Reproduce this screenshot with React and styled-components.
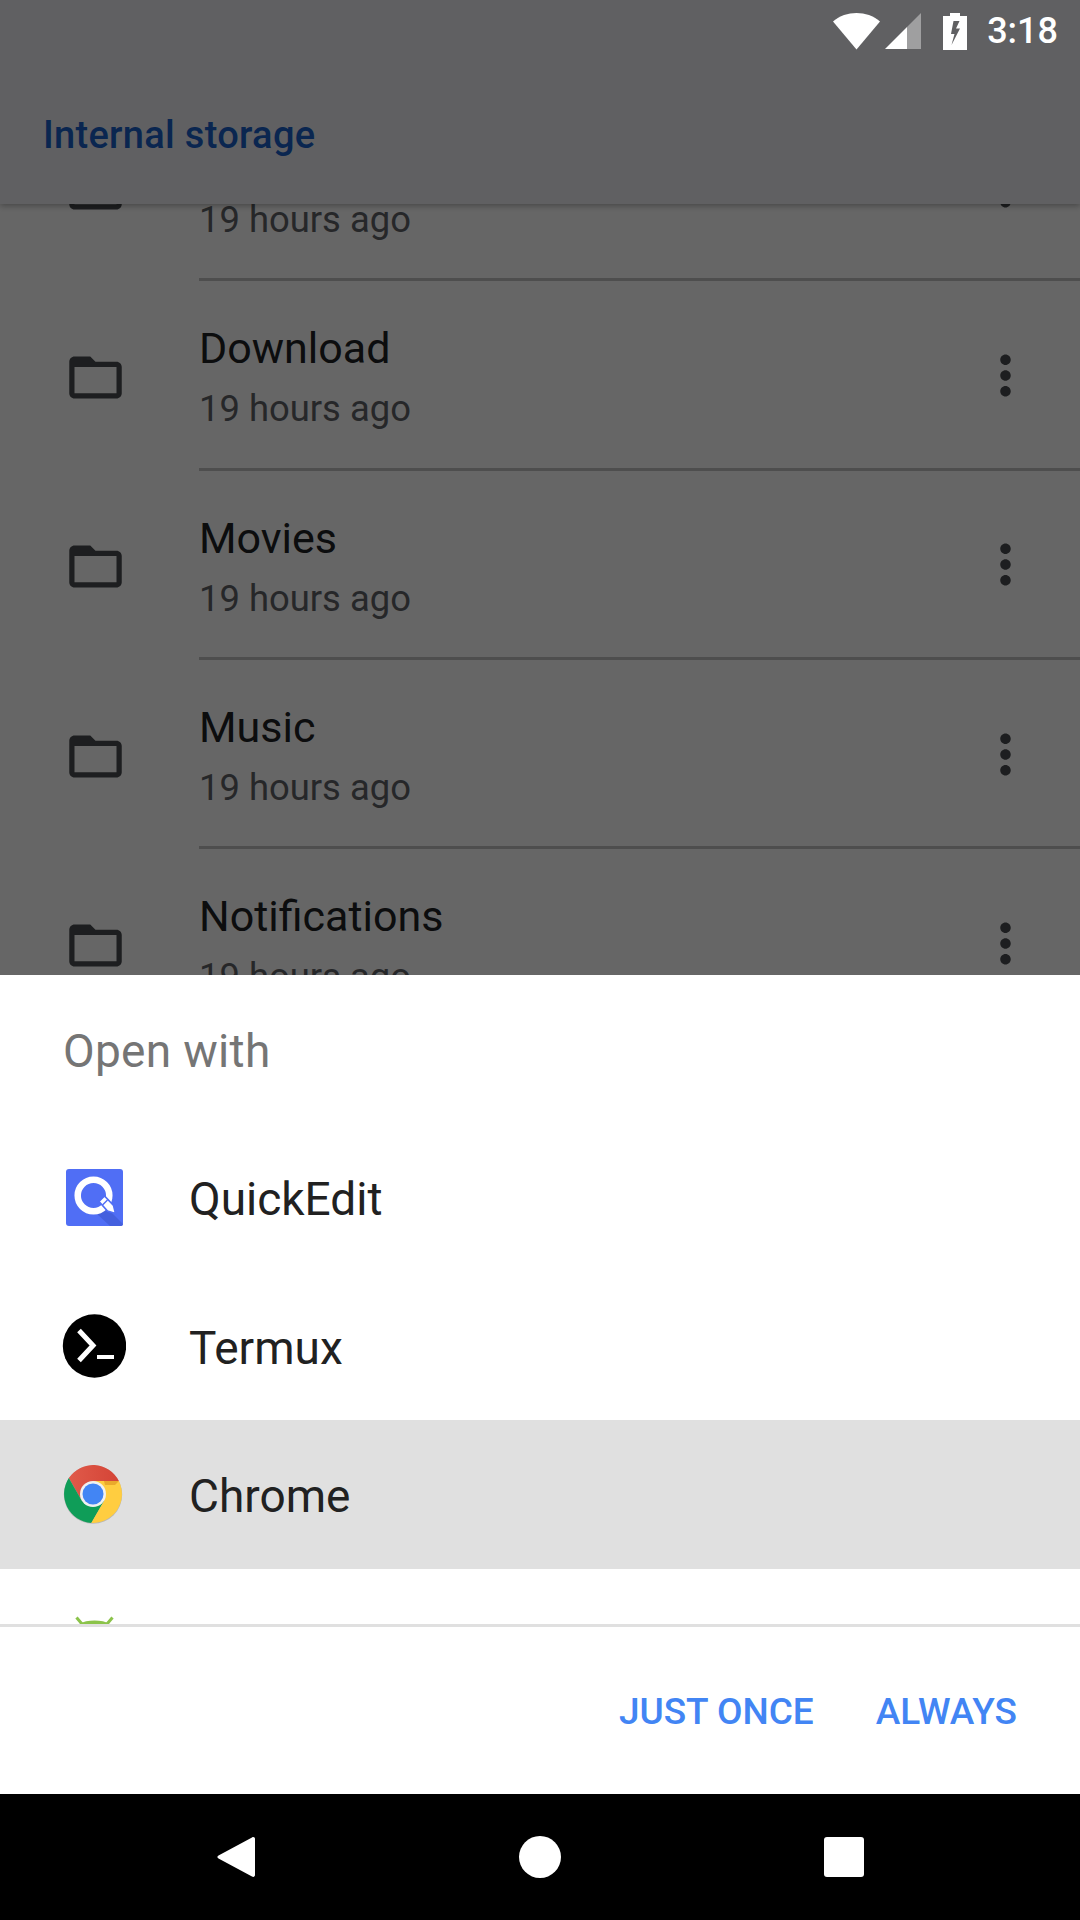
import React from 'react'
import styled, { createGlobalStyle } from 'styled-components'

const GlobalStyle = createGlobalStyle`
  html, body {
    margin: 0;
    padding: 0;
    background: #666;
  }
  body {
    font-family: Roboto, "Liberation Sans", sans-serif;
  }
`

const folders = [
  { name: '\u00a0', time: '19 hours ago' },
  { name: 'Download', time: '19 hours ago' },
  { name: 'Movies', time: '19 hours ago' },
  { name: 'Music', time: '19 hours ago' },
  { name: 'Notifications', time: '19 hours ago' },
]

const Screen = styled.div`
  position: relative;
  width: 1080px;
  height: 1920px;
  overflow: hidden;
  background: #fff;
`

const Page = styled.div`
  display: flex;
  flex-direction: column;
  height: 100%;
`

const Toolbar = styled.header`
  position: relative;
  z-index: 1;
  flex: none;
  height: 204px;
  box-sizing: border-box;
  padding: 114px 0 0 43px;
  background: #eff1f4;
  box-shadow: 0 2px 6px rgba(0, 0, 0, 0.3);
`

const Crumb = styled.div`
  font-size: 38px;
  font-weight: 500;
  line-height: 42px;
  letter-spacing: 0.3px;
  color: #1a5fc8;
`

const FolderList = styled.div`
  flex: 1;
  margin-top: -112px;
`

const FolderRow = styled.div`
  display: flex;
  height: 189.3px;
  padding-left: 64px;
`

const FolderIcon = styled.svg`
  flex: none;
  align-self: center;
  width: 63px;
  height: 63px;
  margin-top: 3px;
  fill: #4a4d50;
`

const FolderBody = styled.div`
  flex: 1;
  display: flex;
  align-items: center;
  margin-left: 72px;
  box-sizing: border-box;
  border-bottom: 3px solid #c4c4c4;
`

const FolderText = styled.div`
  flex: 1;
  padding-top: 3px;
`

const FolderName = styled.div`
  font-size: 43px;
  line-height: 56px;
  color: #202124;
`

const FolderTime = styled.div`
  margin-top: 11px;
  font-size: 36.4px;
  line-height: 44px;
  color: #5f6368;
`

const MoreIcon = styled.svg`
  flex: none;
  width: 63px;
  height: 63px;
  margin: 2px 43px 0 0;
  fill: #4a4d50;
`

const Overlay = styled.div`
  position: absolute;
  inset: 0;
  z-index: 2;
  display: flex;
  flex-direction: column;
  background: rgba(0, 0, 0, 0.6);
`

const StatusBar = styled.div`
  flex: none;
  display: flex;
  align-items: center;
  justify-content: flex-end;
  height: 62px;
  padding-right: 22px;
`

const StatusIcon = styled.svg`
  display: block;
  flex: none;
  margin-left: ${(p) => p.$gap}px;
`

const Clock = styled.div`
  margin-left: 20px;
  font-size: 36px;
  font-weight: 500;
  color: #fff;
`

const Spacer = styled.div`
  flex: 1;
`

const Sheet = styled.section`
  flex: none;
  height: 819px;
  display: flex;
  flex-direction: column;
  background: #fff;
`

const SheetTitle = styled.div`
  flex: none;
  height: 148px;
  box-sizing: border-box;
  padding: 51px 0 0 63px;
  font-size: 46px;
  line-height: 50px;
  letter-spacing: 0.3px;
  color: #757575;
`

const AppList = styled.div`
  flex: none;
  height: 501px;
  overflow: hidden;
`

const AppRow = styled.div`
  display: flex;
  align-items: center;
  height: 148.6px;
  padding-left: 60px;
  background: ${(p) => (p.$active ? '#e0e0e0' : 'transparent')};
`

const AppIcon = styled.svg`
  display: block;
  flex: none;
  width: 66px;
  height: 66px;
`

const AppName = styled.div`
  margin: 4px 0 0 63px;
  font-size: 46px;
  color: #212121;
`

const ButtonBar = styled.div`
  flex: 1;
  display: flex;
  align-items: center;
  justify-content: flex-end;
  gap: 62px;
  padding: 2px 63px 0 0;
  border-top: 3px solid #e0e0e0;
`

const ActionButton = styled.div`
  font-size: 37px;
  font-weight: 500;
  color: #4285f4;
`

const NavBar = styled.nav`
  flex: none;
  height: 126px;
  display: flex;
  align-items: center;
  justify-content: space-between;
  padding: 0 216px 0 217px;
  background: #000;
`

const NavIcon = styled.svg`
  display: block;
  width: ${(p) => p.$w}px;
  height: 42px;
  fill: #fff;
`

const QuickEditIcon = () => (
  <AppIcon viewBox="0 0 66 66">
    <rect x="6" y="5" width="57" height="57" rx="3" fill="#506ef5" />
    <path d="M48 45 L63 60 Q63 62 61 62 L50 62 L36 49 Z" fill="#4460de" />
    <circle cx="33.5" cy="31.5" r="15.8" fill="none" stroke="#fff" strokeWidth="6.5" />
    <path d="M39 37.5 L44.5 32 L53.5 41.5 L55.5 49.5 L47.5 47 Z" fill="#fff" stroke="#506ef5" strokeWidth="1.6" />
    <path d="M42.5 41 L47.5 36" stroke="#506ef5" strokeWidth="1.4" />
  </AppIcon>
)

const TermuxIcon = () => (
  <AppIcon viewBox="0 0 66 66">
    <circle cx="34.5" cy="33" r="31.7" fill="#000" />
    <path d="M19 17.5 L33 32.5 L19 47.5" fill="none" stroke="#fff" strokeWidth="5" />
    <rect x="37" y="42" width="17" height="4" fill="#fff" />
  </AppIcon>
)

const ChromeIcon = () => (
  <AppIcon viewBox="-33 -33 66 66">
    <defs>
      <linearGradient id="chromeRed" x1="0" y1="0" x2="1" y2="0">
        <stop offset="0" stopColor="#e05a4a" />
        <stop offset="1" stopColor="#d44436" />
      </linearGradient>
    </defs>
    <circle cx="0" cy="0.6" r="29.2" fill="#000" opacity="0.18" />
    <path d="M0 0 L0 -13 L25.9 -13 A29 29 0 0 0 -24.2 -15.9 L-11.3 6.5 Z" fill="url(#chromeRed)" />
    <path d="M0 0 L-11.3 6.5 L-24.2 -15.9 A29 29 0 0 0 -1.7 28.9 L11.3 6.5 Z" fill="#0f9d58" />
    <path d="M0 0 L11.3 6.5 L-1.7 28.9 A29 29 0 0 0 25.9 -13 L0 -13 Z" fill="#ffcd40" />
    <path d="M11 -13 L25.9 -13 L22 -9 L12 -9 Z" fill="#eaa92c" />
    <circle cx="0" cy="0" r="13" fill="#f1f1f1" />
    <circle cx="0" cy="0" r="10.5" fill="#4285f4" />
  </AppIcon>
)

const AndroidIcon = () => (
  <AppIcon viewBox="0 0 66 66">
    <path d="M16 18 C19 8 50 8 53 18 L53 34 L16 34 Z" fill="#8bc34a" />
    <path d="M22 14 L16.5 7.5 M47 14 L52.5 7.5" stroke="#8bc34a" strokeWidth="3" />
  </AppIcon>
)

const FolderGlyph = () => (
  <FolderIcon viewBox="0 0 24 24">
    <path d="M20 6h-8l-2-2H4c-1.1 0-1.99.9-1.99 2L2 18c0 1.1.9 2 2 2h16c1.1 0 2-.9 2-2V8c0-1.1-.9-2-2-2zm0 12H4V8h16v10z" />
  </FolderIcon>
)

const MoreGlyph = () => (
  <MoreIcon viewBox="0 0 24 24">
    <path d="M12 8c1.1 0 2-.9 2-2s-.9-2-2-2-2 .9-2 2 .9 2 2 2zm0 2c-1.1 0-2 .9-2 2s.9 2 2 2 2-.9 2-2-.9-2-2-2zm0 6c-1.1 0-2 .9-2 2s.9 2 2 2 2-.9 2-2-.9-2-2-2z" />
  </MoreIcon>
)

export default function App() {
  return (
    <Screen>
      <GlobalStyle />
      <Page>
        <Toolbar>
          <Crumb>Internal storage</Crumb>
        </Toolbar>
        <FolderList>
          {folders.map((folder, idx) => (
            <FolderRow key={idx}>
              <FolderGlyph />
              <FolderBody>
                <FolderText>
                  <FolderName>{folder.name}</FolderName>
                  <FolderTime>{folder.time}</FolderTime>
                </FolderText>
                <MoreGlyph />
              </FolderBody>
            </FolderRow>
          ))}
        </FolderList>
      </Page>
      <Overlay>
        <StatusBar>
          <StatusIcon width="47" height="37" viewBox="0 0 47 37">
            <path d="M0 8.5 C13 -2.8 34 -2.8 47 8.5 L23.5 36.5 Z" fill="#fff" />
          </StatusIcon>
          <StatusIcon $gap={5} width="36" height="36" viewBox="0 0 36 36">
            <path d="M22 14 L36 0 L36 36 L22 36 Z" fill="#fff" opacity="0.4" />
            <path d="M0 36 L22 14 L22 36 Z" fill="#fff" />
          </StatusIcon>
          <StatusIcon $gap={22} width="24" height="37" viewBox="0 0 24 37">
            <path
              fillRule="evenodd"
              d="M7 0 H17 V3 H24 V37 H0 V3 H7 Z M10.5 8 L8 21 H11.5 L8.5 32 L17 15.5 H13 L16.5 8 Z"
              fill="#fff"
            />
          </StatusIcon>
          <Clock>3:18</Clock>
        </StatusBar>
        <Spacer />
        <Sheet>
          <SheetTitle>Open with</SheetTitle>
          <AppList>
            <AppRow>
              <QuickEditIcon />
              <AppName>QuickEdit</AppName>
            </AppRow>
            <AppRow>
              <TermuxIcon />
              <AppName>Termux</AppName>
            </AppRow>
            <AppRow $active>
              <ChromeIcon />
              <AppName>Chrome</AppName>
            </AppRow>
            <AppRow>
              <AndroidIcon />
            </AppRow>
          </AppList>
          <ButtonBar>
            <ActionButton>JUST ONCE</ActionButton>
            <ActionButton>ALWAYS</ActionButton>
          </ButtonBar>
        </Sheet>
        <NavBar>
          <NavIcon $w={38} viewBox="0 0 38 42">
            <path d="M35 1.5 C36.5 0.6 38 1.4 38 3 V39 C38 40.6 36.5 41.4 35 40.5 L1.5 22.5 C0 21.6 0 20.4 1.5 19.5 Z" />
          </NavIcon>
          <NavIcon $w={42} viewBox="0 0 42 42">
            <circle cx="21" cy="21" r="21" />
          </NavIcon>
          <NavIcon $w={40} viewBox="0 0 40 42">
            <rect x="0" y="1" width="40" height="40" rx="3" />
          </NavIcon>
        </NavBar>
      </Overlay>
    </Screen>
  )
}
